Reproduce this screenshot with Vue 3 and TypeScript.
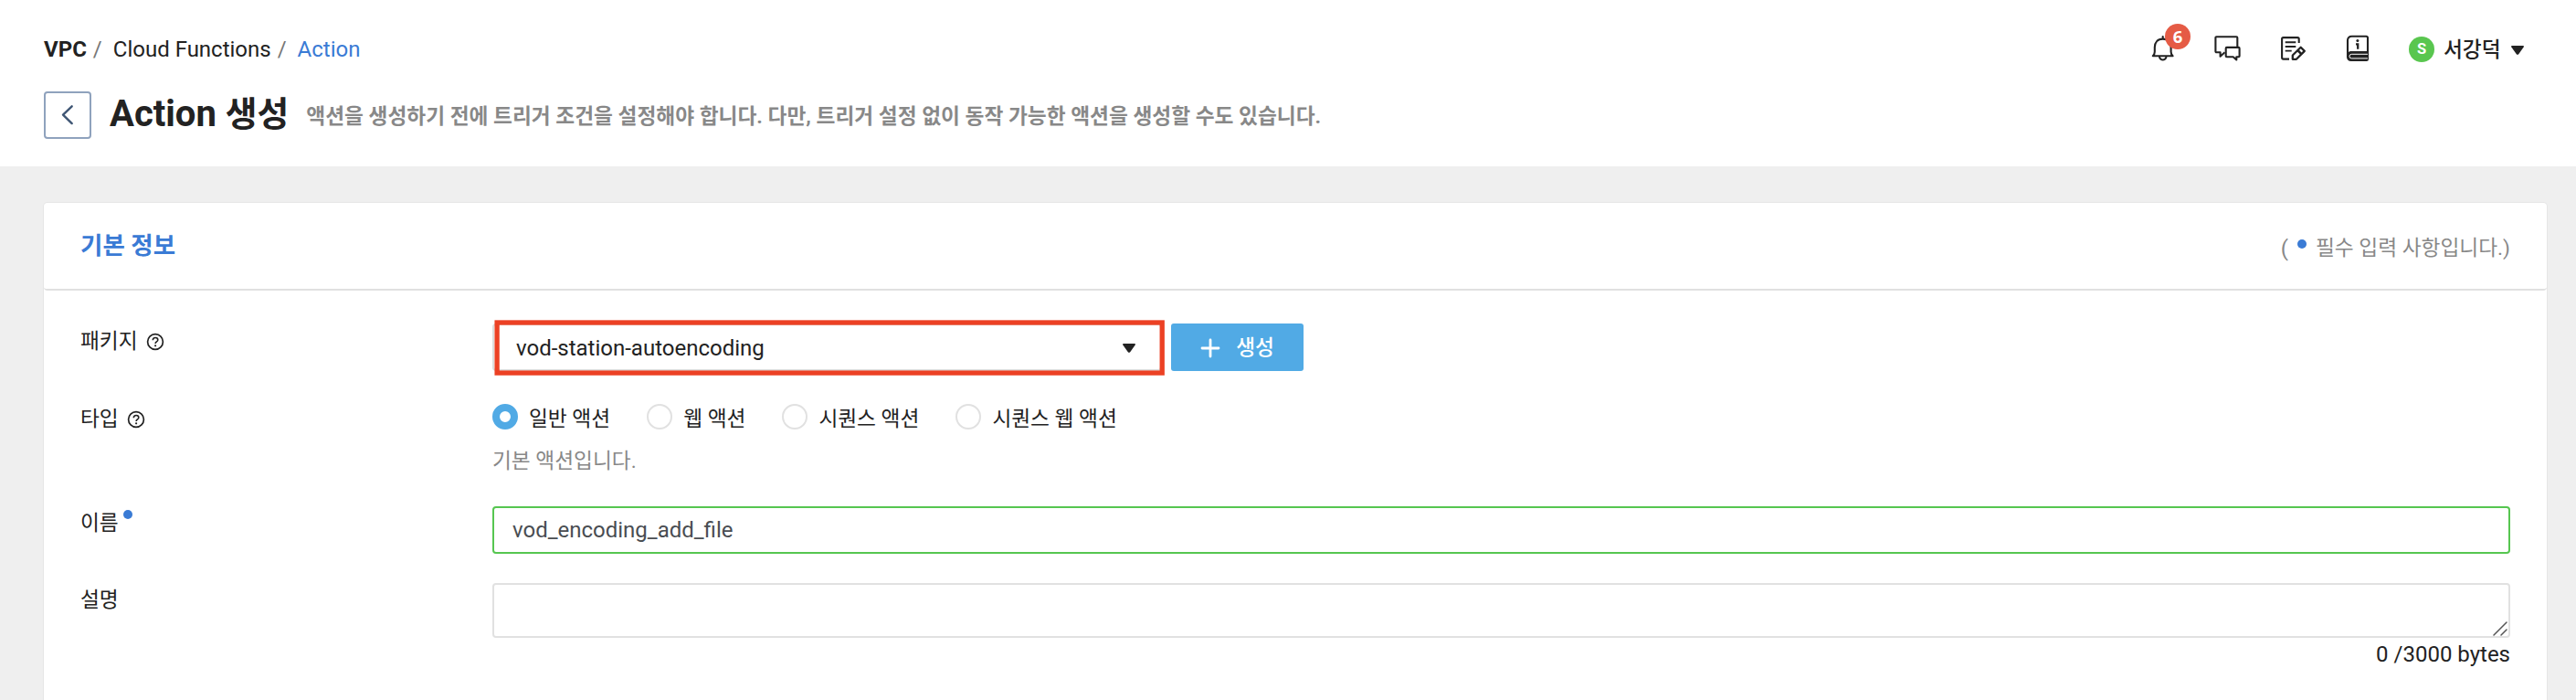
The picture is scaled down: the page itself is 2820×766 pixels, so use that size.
<script setup lang="ts">
import { ref } from 'vue'

interface ActionType {
  value: string
  label: string
}

const actionTypes: ActionType[] = [
  { value: 'basic', label: '일반 액션' },
  { value: 'web', label: '웹 액션' },
  { value: 'sequence', label: '시퀀스 액션' },
  { value: 'sequence-web', label: '시퀀스 웹 액션' },
]

const selectedType = ref('basic')
const packageName = ref('vod-station-autoencoding')
const actionName = ref('vod_encoding_add_file')
const description = ref('')
const notifications = ref(6)
</script>

<template>
  <div class="page">
    <header class="header">
      <div class="topbar">
        <nav class="crumbs">
          <b>VPC</b><i>/</i><a>Cloud Functions</a><i>/</i><a class="current">Action</a>
        </nav>
        <div class="tools">
          <span class="tool">
            <svg viewBox="0 0 32 32" fill="none" stroke="#222" stroke-width="2.1" stroke-linejoin="round" stroke-linecap="round">
              <path d="M15.7 2v2M4.800 23.200c1.400-1.400 2-2.600 2-4.500v-4.900c0-5.600 3.300-9.200 8.900-9.200s8.900 3.600 8.900 9.200v4.900c0 1.900.6 3.100 2 4.500z" />
              <path d="M12 24.500c.6 2 1.900 3.100 3.700 3.100s3.100-1.100 3.700-3.100" stroke-width="2" />
            </svg>
            <span class="count">{{ notifications }}</span>
          </span>
          <span class="tool">
            <svg viewBox="0 0 32 32" fill="none" stroke="#222" stroke-width="2.1" stroke-linejoin="round">
              <path d="M12.500 19.200L7.600 23.700V19.200H3.400a1 1 0 0 1-1-1V3.300a1 1 0 0 1 1-1h21.900a1 1 0 0 1 1 1V13" />
              <path d="M14.700 13.900h12.900a1 1 0 0 1 1 1v8.300a1 1 0 0 1-1 1h-2.300v3.300l-3.600-3.300h-7a1 1 0 0 1-1-1v-8.300a1 1 0 0 1 1-1z" />
            </svg>
          </span>
          <span class="tool">
            <svg viewBox="0 0 32 32" fill="none" stroke="#222" stroke-width="2.1" stroke-linejoin="round">
              <path d="M22.700 9V4.600a1.500 1.500 0 0 0-1.500-1.500H5.600a1.500 1.500 0 0 0-1.500 1.500v20.500a1.500 1.500 0 0 0 1.500 1.500H12" />
              <path d="M7.700 8.300h11.600M7.700 13h11.600M7.700 17.600h7" stroke-width="1.9" />
              <path d="M15.800 26.800v-4.300l8.900-8.700 4.100 4.100-8.900 8.900z" stroke-width="2.3" />
              <path d="M21.300 17l4.300 4.300" stroke-width="2.600" />
            </svg>
          </span>
          <span class="tool">
            <svg viewBox="0 0 32 32" fill="none" stroke="#222" stroke-width="2.1" stroke-linejoin="round">
              <path d="M27 19V3.400a1.600 1.600 0 0 0-1.600-1.600H9.500C6.700 1.800 5 3.500 5 6v19" />
              <path d="M28 18v8.800a2.200 2.200 0 0 1-2.200 2.200H8.500A4.500 4.500 0 0 1 4 24.500c0-4 1.800-6.500 5-6.500z" fill="#222" stroke="none" />
              <path d="M27 21.300H9.300a2.300 2.300 0 0 0 0 4.600H27" stroke="#fff" stroke-width="1" />
              <circle cx="15.900" cy="6.600" r="1.500" fill="#222" stroke="none" />
              <path d="M14 10.400h2.200v5.300" stroke-width="2.300" stroke-linejoin="miter" />
            </svg>
          </span>
          <span class="avatar">S</span>
          <span class="user">서강덕</span>
          <svg class="caret" viewBox="0 0 14 10"><path d="M1 0h12q1.400.2.700 1.400L8.200 9.200q-1.200 1.300-2.400 0L.300 1.400Q-.4.200 1 0z" fill="#222" /></svg>
        </div>
      </div>
      <div class="heading">
        <button class="back" type="button" aria-label="back">
          <svg viewBox="0 0 52 52" fill="none" stroke="#3f5674" stroke-width="2.4" stroke-linecap="round" stroke-linejoin="round"><path d="M30.700 16.300L21 25.700l9.700 9.400" /></svg>
        </button>
        <h1>Action <span>생성</span></h1>
        <p>액션을 생성하기 전에 트리거 조건을 설정해야 합니다. 다만, 트리거 설정 없이 동작 가능한 액션을 생성할 수도 있습니다.</p>
      </div>
    </header>

    <main class="main">
      <section class="card">
        <div class="card-head">
          <h2>기본 정보</h2>
          <p class="required"><span class="paren">(</span><span class="dot"></span>필수 입력 사항입니다.)</p>
        </div>
        <form class="form">
          <div class="row">
            <label class="label package-label">패키지
              <svg class="help" viewBox="0 0 20 20" fill="none" stroke="#222" stroke-width="1.7"><circle cx="10" cy="10" r="8.400" /><path d="M7.300 8.200c0-1.700 1.200-2.700 2.800-2.700s2.700 1 2.700 2.400c0 2-2.700 2.100-2.700 4.100" stroke-width="1.600" /><circle cx="10.100" cy="14.300" r="1.100" fill="#222" stroke="none" /></svg>
            </label>
            <div class="package">
              <div class="select">
                <span>{{ packageName }}</span>
                <svg class="caret" viewBox="0 0 14 10"><path d="M1 0h12q1.400.2.700 1.400L8.200 9.200q-1.200 1.300-2.400 0L.300 1.400Q-.4.200 1 0z" fill="#222" /></svg>
                <svg class="highlight" viewBox="0 0 741 64"><rect x="7.100" y="5" width="728.100" height="55.100" fill="none" stroke="#ec4124" stroke-width="5.300" /></svg>
              </div>
              <button class="create" type="button">
                <svg viewBox="0 0 22 22" stroke="#fff" stroke-width="2.8" stroke-linecap="round"><path d="M11 2v18M2 11h18" /></svg><span>생성</span>
              </button>
            </div>
          </div>

          <div class="row">
            <label class="label type-label">타입
              <svg class="help" viewBox="0 0 20 20" fill="none" stroke="#222" stroke-width="1.7"><circle cx="10" cy="10" r="8.400" /><path d="M7.300 8.200c0-1.700 1.200-2.700 2.800-2.700s2.700 1 2.700 2.400c0 2-2.700 2.100-2.700 4.100" stroke-width="1.600" /><circle cx="10.100" cy="14.300" r="1.100" fill="#222" stroke="none" /></svg>
            </label>
            <div>
              <div class="radios">
                <label v-for="t in actionTypes" :key="t.value" class="radio">
                  <input v-model="selectedType" type="radio" name="type" :value="t.value" />
                  <span>{{ t.label }}</span>
                </label>
              </div>
              <p class="hint">기본 액션입니다.</p>
            </div>
          </div>

          <div class="row">
            <label class="label">이름<span class="dot name-dot"></span></label>
            <input v-model="actionName" class="text-input" type="text" />
          </div>

          <div class="row">
            <label class="label">설명</label>
            <div>
              <div class="area">
                <textarea v-model="description"></textarea>
                <svg class="grip" viewBox="0 0 16 16" stroke="#555" stroke-width="1.5" stroke-linecap="round"><path d="M1 15L15 1M9 15l6-6" /></svg>
              </div>
              <p class="bytes">{{ description.length }} /3000 bytes</p>
            </div>
          </div>
        </form>
      </section>
    </main>
  </div>
</template>

<style>
body {
  margin: 0;
  overflow: hidden;
}
</style>

<style scoped>
.page {
  height: 766px;
  display: flex;
  flex-direction: column;
  overflow: hidden;
  background: #efefef;
  color: #222;
  font: 400 24px/36px Roboto, "Noto Sans CJK KR", sans-serif;
}
.page * { box-sizing: border-box; }
h1, h2, p { margin: 0; }
button, input, textarea { font: inherit; }

.header {
  flex: none;
  height: 182px;
  padding: 34px 57px 0 48px;
  background: #fff;
}
.topbar {
  display: flex;
  justify-content: space-between;
  height: 40px;
  line-height: 40px;
}
.crumbs { display: flex; }
.crumbs i {
  margin: 0 12px 0 7px;
  color: #777;
  font-style: normal;
}
.crumbs .current { color: #3a7bd5; }
.tools { display: flex; align-items: center; }
.tool {
  position: relative;
  width: 32px;
  height: 32px;
  margin-right: 39px;
}
.tool svg { display: block; width: 32px; height: 32px; }
.count {
  position: absolute;
  left: 18px;
  top: -12px;
  width: 28px;
  height: 28px;
  border-radius: 50%;
  background: #e55b45;
  color: #fff;
  font: 700 18.5px/28px "Noto Sans", sans-serif;
  text-align: center;
}
.avatar {
  width: 28px;
  height: 28px;
  margin-left: 1px;
  border-radius: 50%;
  background: #59c64f;
  color: #fff;
  font-size: 16.5px;
  font-weight: 700;
  line-height: 28px;
  text-align: center;
}
.user {
  width: 74px;
  margin-left: 10px;
  padding-top: 1px;
  font-size: 22.7px;
  font-weight: 500;
  white-space: nowrap;
}
.caret { display: block; width: 14px; height: 10px; }
.topbar .caret { margin-top: 2px; }

.heading {
  display: flex;
  align-items: center;
  height: 52px;
  margin-top: 26px;
}
.back {
  width: 52px;
  height: 52px;
  padding: 0;
  border: 2px solid #8fa2bd;
  border-radius: 4px;
  background: #fff;
}
.back svg { display: block; width: 52px; height: 52px; margin: -2px; }
h1 {
  margin-left: 20px;
  padding-bottom: 3px;
  font-size: 40px;
  font-weight: 700;
  line-height: 48px;
}
h1 span { font-size: 37.8px; }
.heading p {
  margin-left: 19px;
  padding-top: 3px;
  color: #888;
  font-size: 22.7px;
  font-weight: 700;
  white-space: nowrap;
}

.main { flex: 1; padding: 40px 32px 0 48px; }
.card {
  height: 600px;
  border-radius: 4px;
  background: #fff;
  box-shadow: 0 0 0 1px #e6e6e6;
}
.card-head {
  display: flex;
  justify-content: space-between;
  height: 96px;
  padding: 0 40px;
  border-bottom: 2px solid #e0e0e0;
  border-radius: 4px;
}
h2 {
  margin-top: 29px;
  color: #3a7bd5;
  font-size: 26.5px;
  font-weight: 700;
  line-height: 36px;
}
.required {
  display: flex;
  margin-top: 32px;
  color: #888;
  font-size: 22.7px;
}
.dot {
  display: block;
  width: 10px;
  height: 10px;
  border-radius: 50%;
  background: #3a7bd5;
}
.required .dot { margin: 8px 10px 0; }
.paren { font-size: 24px; }

.form {
  display: flex;
  flex-direction: column;
  gap: 32px;
  padding: 36px 40px 0;
}
.row {
  display: grid;
  grid-template-columns: 451px 1fr;
  align-items: start;
}
.label {
  display: flex;
  align-items: center;
  height: 38px;
  font-size: 22.7px;
}
.package-label { height: 40px; }
.type-label { height: 41px; }
.help { width: 20px; height: 20px; margin-left: 9px; }
.name-dot { align-self: flex-start; margin: 4px 0 0 5px; }

.package { display: flex; gap: 10px; }
.select {
  position: relative;
  display: flex;
  align-items: center;
  justify-content: space-between;
  width: 733px;
  height: 52px;
  padding: 2px 27px 0 24px;
  border: 2px solid #ddd;
  border-radius: 4px;
}
.select .caret { margin-top: -1px; }
.highlight {
  position: absolute;
  left: -4px;
  top: -8px;
  width: 741px;
  height: 64px;
}
.create {
  display: flex;
  align-items: center;
  justify-content: center;
  gap: 17px;
  width: 145px;
  height: 52px;
  padding: 0;
  border: 0;
  border-radius: 3px;
  background: #51aae5;
  color: #fff;
  font-size: 22.7px;
  font-weight: 500;
}
.create svg { width: 22px; height: 22px; margin-top: 2px; }
.create span { padding-top: 2px; }

.radios { display: flex; gap: 40px; height: 36px; align-items: center; }
.radio {
  display: flex;
  align-items: center;
  font-size: 22.7px;
}
.radio input {
  appearance: none;
  width: 28px;
  height: 28px;
  margin: 0 12px 0 0;
  border: 2px solid #e1e1e1;
  border-radius: 50%;
  background: #fff;
}
.radio input:checked { border: 8px solid #51aae5; }
.radio span { padding-top: 5px; }
.hint {
  margin: 13px 0 -1px;
  color: #888;
  font-size: 22.7px;
}
.text-input {
  width: 100%;
  height: 52px;
  padding: 0 20px;
  border: 2px solid #56c650;
  border-radius: 4px;
  outline: none;
  color: #494d52;
}
.area { position: relative; height: 60px; }
textarea {
  display: block;
  width: 100%;
  height: 60px;
  padding: 8px 20px;
  border: 2px solid #e1e1e1;
  border-radius: 4px;
  outline: none;
  resize: none;
}
.grip {
  position: absolute;
  right: 3px;
  bottom: 2px;
  width: 16px;
  height: 16px;
}
.bytes { text-align: right; }
</style>
